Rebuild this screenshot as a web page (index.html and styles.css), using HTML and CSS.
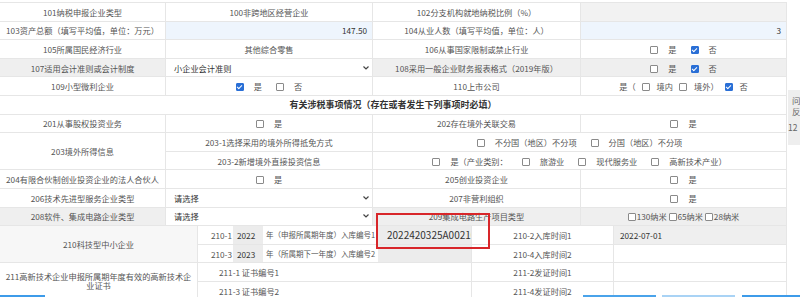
FILE: index.html
```html
<!DOCTYPE html>
<html lang="zh-CN">
<head>
    <meta charset="UTF-8">
    <title>企业基础信息表</title>
    <link rel="stylesheet" href="styles.css">
</head>
<body>
    <table class="grid main">
        <colgroup>
            <col class="c1"><col class="c2"><col class="c3"><col class="c4">
        </colgroup>
        <tr>
            <td>101纳税申报企业类型</td>
            <td>100非跨地区经营企业</td>
            <td>102分支机构就地纳税比例（%）</td>
            <td class="dis"></td>
        </tr>
        <tr>
            <td>103资产总额（填写平均值，单位：万元）</td>
            <td class="inp">147.50</td>
            <td>104从业人数（填写平均值，单位：人）</td>
            <td class="inp">3</td>
        </tr>
        <tr>
            <td>105所属国民经济行业</td>
            <td>其他综合零售</td>
            <td>106从事国家限制或禁止行业</td>
            <td><span class="cb"></span><span class="opt">是</span><span class="cb on"></span><span class="opt">否</span></td>
        </tr>
        <tr class="grey">
            <td>107适用会计准则或会计制度</td>
            <td class="sel"><div class="pick"><span>小企业会计准则</span><svg width="6" height="4" viewBox="0 0 6 4"><polyline points="0.5,0.5 3,3 5.5,0.5" fill="none" stroke="#444" stroke-width="1.2"/></svg></div></td>
            <td>108采用一般企业财务报表格式（2019年版）</td>
            <td><span class="cb"></span><span class="opt">是</span><span class="cb on"></span><span class="opt">否</span></td>
        </tr>
        <tr>
            <td>109小型微利企业</td>
            <td><span class="cb on"></span><span class="opt">是</span><span class="cb"></span><span class="opt">否</span></td>
            <td>110上市公司</td>
            <td class="few">是（<span class="cb"></span>境内<span class="cb"></span>境外）<span class="cb on"></span>否</td>
        </tr>
        <tr>
            <td colspan="4" class="head">有关涉税事项情况（存在或者发生下列事项时必填）</td>
        </tr>
        <tr>
            <td>201从事股权投资业务</td>
            <td><span class="cb"></span><span class="opt">是</span></td>
            <td>202存在境外关联交易</td>
            <td><span class="cb"></span><span class="opt">是</span></td>
        </tr>
        <tr>
            <td rowspan="2">203境外所得信息</td>
            <td>203-1选择采用的境外所得抵免方式</td>
            <td colspan="2"><span class="cb"></span><span class="opt">不分国（地区）不分项</span><span class="cb"></span><span class="opt">分国（地区）不分项</span></td>
        </tr>
        <tr>
            <td>203-2新增境外直接投资信息</td>
            <td colspan="2"><span class="cb"></span><span class="opt">是（产业类别：</span><span class="cb"></span><span class="opt">旅游业</span><span class="cb"></span><span class="opt">现代服务业</span><span class="cb"></span>高新技术产业）</td>
        </tr>
        <tr>
            <td>204有限合伙制创业投资企业的法人合伙人</td>
            <td><span class="cb"></span><span class="opt">是</span></td>
            <td>205创业投资企业</td>
            <td><span class="cb"></span><span class="opt">是</span></td>
        </tr>
        <tr>
            <td>206技术先进型服务企业类型</td>
            <td class="sel"><div class="pick"><span>请选择</span><svg width="6" height="4" viewBox="0 0 6 4"><polyline points="0.5,0.5 3,3 5.5,0.5" fill="none" stroke="#444" stroke-width="1.2"/></svg></div></td>
            <td>207非营利组织</td>
            <td><span class="cb"></span><span class="opt">是</span></td>
        </tr>
        <tr class="grey">
            <td>208软件、集成电路企业类型</td>
            <td class="sel"><div class="pick"><span>请选择</span><svg width="6" height="4" viewBox="0 0 6 4"><polyline points="0.5,0.5 3,3 5.5,0.5" fill="none" stroke="#444" stroke-width="1.2"/></svg></div></td>
            <td>209集成电路生产项目类型</td>
            <td class="tight"><span class="cb"></span>130纳米 <span class="cb"></span>65纳米 <span class="cb"></span>28纳米</td>
        </tr>
    </table>

    <table class="grid sub">
        <colgroup>
            <col class="s1"><col class="s2"><col class="s3"><col class="s4">
        </colgroup>
        <tr>
            <td rowspan="2" class="soft">210科技型中小企业</td>
            <td class="mix">
                <div class="line">
                    <span class="no">210-1</span>
                    <span class="box">2022</span>
                    <span class="txt">年（申报所属期年度）入库编号1</span>
                    <span class="box code">2022420325A00210</span>
                </div>
            </td>
            <td>210-2入库时间1</td>
            <td class="val filled">2022-07-01</td>
        </tr>
        <tr>
            <td class="mix">
                <div class="line">
                    <span class="no">210-3</span>
                    <span class="box">2023</span>
                    <span class="txt">年（所属期下一年度）入库编号2</span>
                    <span class="box code"></span>
                </div>
            </td>
            <td>210-4入库时间2</td>
            <td class="val"></td>
        </tr>
        <tr>
            <td rowspan="2" class="wrap">211高新技术企业申报所属期年度有效的高新技术企业证书</td>
            <td class="cert">211-1 证书编号1</td>
            <td>211-2发证时间1</td>
            <td class="val"></td>
        </tr>
        <tr>
            <td class="cert">211-3 证书编号2</td>
            <td>211-4发证时间2</td>
            <td class="val"></td>
        </tr>
    </table>

    <div class="mark"></div>

    <div class="side">
        <div class="side-q">问<br>反</div>
        <div class="side-n">12</div>
    </div>

    <div class="btnbar">
        <span class="btn b1"></span>
        <span class="btn b2"></span>
        <span class="btn b3"></span>
        <span class="btn b4"></span>
    </div>
</body>
</html>
```

FILE: styles.css
```css
html, body {
    overflow: hidden;
}
body {
    margin: 0;
    background-color: #fff;
    font-family: "Noto Sans CJK SC", "Microsoft YaHei", sans-serif;
    font-size: 8.2px;
    color: #555;
}
.grid {
    border-collapse: collapse;
    table-layout: fixed;
    width: 787px;
    margin-left: -1px;
}
.main {
    margin-top: 2px;
}
.grid td {
    height: 17.6px;
    padding: 0 6px;
    border: 1px solid #e6e6e6;
    text-align: center;
    vertical-align: middle;
    white-space: nowrap;
    overflow: hidden;
}
.c1 { width: 166px; }
.c2 { width: 207px; }
.c3 { width: 208px; }
.c4 { width: 206px; }
.s1 { width: 198px; }
.s2 { width: 274px; }
.s3 { width: 142px; }
.s4 { width: 173px; }

.sub tr:first-child td {
    border-top: 0;
}
.grey td {
    background-color: #efefef;
}
.grid td.dis {
    background-color: #f2f2f2;
}
.grid td.inp {
    background-color: #eef5fd;
    text-align: right;
    padding-right: 5px;
    color: #333;
}
.grid td.sel {
    background-color: #fff;
    padding: 0 3px 0 8px;
    color: #333;
}
.pick {
    display: flex;
    align-items: center;
    justify-content: space-between;
}
.head {
    font-size: 9px;
    font-weight: bold;
    color: #333;
}

.cb {
    display: inline-block;
    width: 6px;
    height: 6px;
    border: 1px solid #8a8a8a;
    border-radius: 1px;
    background-color: #fff;
    vertical-align: -1px;
    margin-right: 10px;
    position: relative;
}
.cb.on {
    background-color: #2a6fd6;
    border-color: #2a6fd6;
}
.cb.on::after {
    content: "";
    position: absolute;
    left: 1.5px;
    top: 0;
    width: 2px;
    height: 4px;
    border: solid #fff;
    border-width: 0 1px 1px 0;
    transform: rotate(45deg);
}
.opt {
    margin-right: 14px;
}
.opt:last-child {
    margin-right: 0;
}
.few .cb {
    margin: 0 7px 0 6px;
}
.tight .cb {
    margin-right: 1px;
    margin-left: 0;
}

.soft {
    background-color: #f7f7f7;
}
.grid td.mix {
    padding: 0;
}
.line {
    display: grid;
    grid-template-columns: 35px 30px 1fr 93px;
    height: 17.6px;
    align-items: stretch;
}
.line span {
    display: flex;
    align-items: center;
    overflow: hidden;
    white-space: nowrap;
}
.no {
    justify-content: flex-end;
    padding-right: 1px;
}
.box {
    background-color: #ececec;
    color: #333;
    padding-left: 4px;
}
.txt {
    padding-left: 3px;
    font-size: 7.5px;
}
.code {
    padding-left: 9px;
    font-size: 10px;
}
.grid td.val {
    text-align: left;
    padding-left: 6px;
    color: #333;
}
.grid td.filled {
    background-color: #efefef;
}
.grid td.cert {
    text-align: left;
    padding-left: 21px;
}
.grid td.wrap {
    white-space: normal;
    word-break: break-all;
    line-height: 1.15;
    padding: 0 3px;
}

.mark {
    position: absolute;
    left: 376px;
    top: 213px;
    width: 110px;
    height: 32px;
    border: 2px solid #d8262a;
}

.side {
    position: fixed;
    left: 788px;
    top: 90px;
    width: 40px;
    height: 55px;
    background-color: #eeeeee;
    color: #666;
    font-size: 8.5px;
}
.side-q {
    padding: 5px 0 0 4px;
    line-height: 1.3;
}
.side-n {
    padding: 4px 0 0 0;
}

.btnbar {
    position: fixed;
    left: 0;
    right: 0;
    bottom: 0;
    height: 2px;
}
.btn {
    position: absolute;
    top: 0;
    height: 2px;
}
.b1 { left: 0; width: 45px; background-color: #3d9be9; }
.b2 { left: 583px; width: 73px; background-color: #4aa3ea; }
.b3 { left: 662px; width: 73px; background-color: #a9d3f5; }
.b4 { left: 742px; width: 60px; background-color: #3d9be9; }
```
